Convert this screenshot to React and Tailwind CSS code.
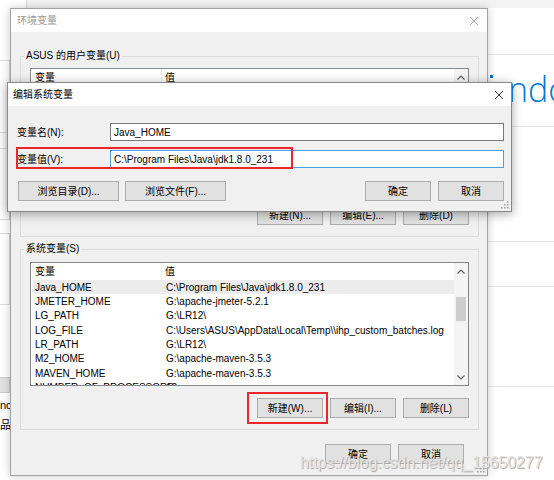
import React from "react";

const ui = "font-['Liberation_Sans','Noto_Sans_CJK_SC',sans-serif] text-[10px] text-black";

const systemRows = [
  ["Java_HOME", "C:\\Program Files\\Java\\jdk1.8.0_231"],
  ["JMETER_HOME", "G:\\apache-jmeter-5.2.1"],
  ["LG_PATH", "G:\\LR12\\"],
  ["LOG_FILE", "C:\\Users\\ASUS\\AppData\\Local\\Temp\\\\ihp_custom_batches.log"],
  ["LR_PATH", "G:\\LR12\\"],
  ["M2_HOME", "G:\\apache-maven-3.5.3"],
  ["MAVEN_HOME", "G:\\apache-maven-3.5.3"],
  ["NUMBER_OF_PROCESSORS", "12"],
];

function Chevron({ up }) {
  return (
    <svg width="8" height="5" viewBox="0 0 8 5" className="block">
      <path
        d={up ? "M0.5 4.5 L4 1 L7.5 4.5" : "M0.5 0.5 L4 4 L7.5 0.5"}
        fill="none"
        stroke="#606060"
        strokeWidth="1.2"
      />
    </svg>
  );
}

function Close({ color }) {
  return (
    <svg width="10" height="10" viewBox="0 0 10 10" className="block">
      <path d="M1 1 L9 9 M9 1 L1 9" stroke={color} strokeWidth="1" />
    </svg>
  );
}

function Grip() {
  const dots = [
    [6, 0],
    [6, 3],
    [3, 3],
    [6, 6],
    [3, 6],
    [0, 6],
  ];
  return (
    <svg width="8" height="8" viewBox="0 0 8 8" className="absolute bottom-[2px] right-[2px]">
      {dots.map(([x, y], i) => (
        <rect key={i} x={x} y={y} width="1.5" height="1.5" fill="#a0a0a0" />
      ))}
    </svg>
  );
}

function Btn({ children, className = "" }) {
  return (
    <button
      type="button"
      className={
        "flex h-[20px] w-[66px] items-center justify-center border border-[#adadad] bg-[#e1e1e1] " +
        className
      }
    >
      {children}
    </button>
  );
}

function VarList({ rows, className, withThumb }) {
  return (
    <div className={"flex border border-[#828790] bg-white " + className}>
      <div className="min-w-0 flex-1 overflow-hidden">
        <div className="flex h-[17px] items-center">
          <div className="flex h-full w-[131px] shrink-0 items-center border-r border-[#ececec] pl-[4px]">
            变量
          </div>
          <div className="pl-[3px]">值</div>
        </div>
        {rows.map(([name, value], i) => (
          <div
            key={name}
            className={
              "ml-[2px] flex h-[14.35px] items-center whitespace-nowrap " +
              (i === 0 ? "bg-[#ececec]" : "")
            }
          >
            <div className="w-[129px] shrink-0 pl-[2px]">{name}</div>
            <div className="pl-[4px]">{value}</div>
          </div>
        ))}
      </div>
      <div className="flex w-[14px] shrink-0 flex-col bg-[#f4f4f4]">
        <div className="flex h-[16px] items-center justify-center">
          <Chevron up />
        </div>
        <div className="flex-1 px-[2px] pt-[18px]">
          {withThumb && <div className="h-[24px] bg-[#cdcdcd]" />}
        </div>
        <div className="flex h-[16px] items-center justify-center">
          <Chevron />
        </div>
      </div>
    </div>
  );
}

function Background() {
  return (
    <>
      {/* settings window behind the dialogs */}
      <div className="absolute left-[26px] top-0 h-[8px] w-[528px] border-l border-[#d6d6d6] bg-[#f3f3f3]" />
      <div className="absolute left-[-10px] top-[60px] h-[73px] w-[20px] border border-[#dcdcdc]" />
      <div className="absolute left-[-10px] top-[148px] h-[72px] w-[20px] border border-[#dcdcdc]" />
      <div className="absolute left-[-10px] top-[233px] h-[72px] w-[20px] border border-[#dcdcdc]" />
      <div className="absolute left-[-10px] top-[377px] h-[16px] w-[20px] border border-[#cccccc] bg-[#e1e1e1]" />
      <div className="absolute left-0 top-[398px] text-[11px] leading-[14px]">nd</div>
      <div className="absolute left-0 top-[418px] text-[11px] leading-[14px]">品 I</div>

      <div className="absolute left-[488px] top-[54px] h-px w-[66px] bg-[#e3e3e3]" />
      <div className="absolute left-[488px] top-[126px] h-px w-[66px] bg-[#e3e3e3]" />
      <div className="absolute left-[488px] top-[241px] h-px w-[66px] bg-[#e3e3e3]" />
      <div className="absolute left-[488px] top-[286px] h-px w-[66px] bg-[#e3e3e3]" />
      <div className="absolute left-[488px] top-[386px] h-px w-[66px] bg-[#e3e3e3]" />
      <div className="absolute left-[490px] top-[75px] h-[3px] w-[3px] bg-[#0078d7]" />
      <div className="absolute left-[508px] top-[72px] whitespace-nowrap font-['Open_Sans',sans-serif] text-[34px] font-light leading-[34px] text-[#0078d7]">
        ndows
      </div>
    </>
  );
}

function EnvDialog() {
  return (
    <div className="absolute left-[10px] top-[8px] flex h-[468px] w-[478px] flex-col border border-[#a3a3a3] bg-[#f0f0f0] shadow-[0_0_8px_rgba(0,0,0,0.22)]">
      <div className="flex h-[23px] items-center justify-between bg-white pl-[6px] pr-[8px] text-[#9a9a9a]">
        <span>环境变量</span>
        <Close color="#a0a0a0" />
      </div>
      <div className="flex flex-col pl-[9px] pr-[8px] pt-[16px]">
        <fieldset className="border border-[#dcdcdc] px-[9px] pb-[11px]">
          <legend className="ml-[-6px] px-[2px] leading-[16px]">ASUS 的用户变量(U)</legend>
          <VarList rows={[]} className="mt-[4px] h-[129px]" />
          <div className="mt-[8px] flex justify-end gap-[7px]">
            <Btn>新建(N)...</Btn>
            <Btn>编辑(E)...</Btn>
            <Btn>删除(D)</Btn>
          </div>
        </fieldset>

        <fieldset className="mt-[4px] border border-[#dcdcdc] px-[9px] pb-[11px]">
          <legend className="ml-[-6px] px-[2px] leading-[16px]">系统变量(S)</legend>
          <VarList rows={systemRows} className="mt-[5px] h-[124px]" withThumb />
          <div className="mt-[12px] flex justify-end gap-[7px]">
            <div className="relative">
              <Btn className="h-[19px]">新建(W)...</Btn>
              <div className="absolute bottom-[-6px] left-[-10px] right-[-5px] top-[-6px] border-2 border-[#e8262b]" />
            </div>
            <Btn className="h-[19px]">编辑(I)...</Btn>
            <Btn className="h-[19px]">删除(L)</Btn>
          </div>
        </fieldset>

        <div className="mt-[14px] flex justify-end gap-[7px] pr-[15px]">
          <Btn>确定</Btn>
          <Btn>取消</Btn>
        </div>
      </div>
      <Grip />
    </div>
  );
}

function EditDialog() {
  return (
    <div className="absolute left-[7px] top-[82px] flex h-[130px] w-[505px] flex-col border border-[#8a8a8a] bg-[#f0f0f0] shadow-[0_2px_10px_rgba(0,0,0,0.35)]">
      <div className="flex h-[23px] items-center justify-between bg-white pl-[5px] pr-[7px]">
        <span>编辑系统变量</span>
        <Close color="#333333" />
      </div>
      <div className="relative flex flex-col pl-[9px] pr-[7px] pt-[17px]">
        <div className="flex items-center">
          <div className="w-[93px]">变量名(N):</div>
          <div className="flex h-[18px] flex-1 items-center border border-[#7a7a7a] bg-white pl-[3px]">
            Java_HOME
          </div>
        </div>
        <div className="mt-[9px] flex items-center">
          <div className="w-[93px]">变量值(V):</div>
          <div className="flex h-[18px] flex-1 items-center border border-[#4d9ee6] bg-white pl-[3px]">
            C:\Program Files\Java\jdk1.8.0_231
          </div>
        </div>
        <div className="mt-[13px] flex items-center">
          <div className="ml-[1px] flex gap-[6px]">
            <Btn className="w-[101px]">浏览目录(D)...</Btn>
            <Btn className="w-[101px]">浏览文件(F)...</Btn>
          </div>
          <div className="ml-auto flex gap-[7px]">
            <Btn className="border-[#0078d7]">确定</Btn>
            <Btn>取消</Btn>
          </div>
        </div>
        {/* annotation box */}
        <div className="absolute left-[8px] top-[41px] h-[22px] w-[277px] border-2 border-[#e8262b]" />
      </div>
      <Grip />
    </div>
  );
}

export default function App() {
  return (
    <div className={"relative h-[480px] w-[554px] overflow-hidden bg-white " + ui}>
      <Background />
      <EnvDialog />
      <EditDialog />
      <div className="absolute left-[300px] top-[453px] whitespace-nowrap font-['Liberation_Sans',sans-serif] text-[15.8px] leading-[19px] text-[#e4e4e4] [text-shadow:1px_1px_1px_#a8a8a8]">
        https://blog.csdn.net/qq_15650277
      </div>
    </div>
  );
}
